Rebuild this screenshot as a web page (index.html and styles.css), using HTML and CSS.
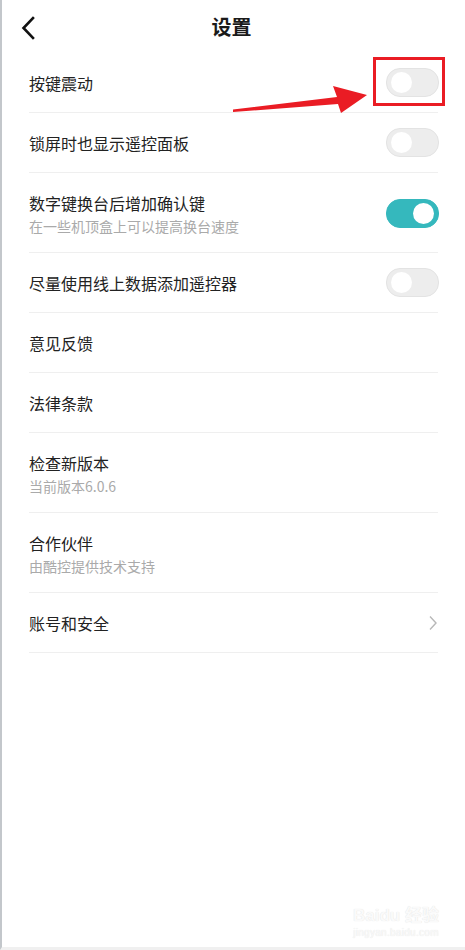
FILE: index.html
```html
<!DOCTYPE html>
<html lang="zh-CN">
<head>
    <meta charset="UTF-8">
    <meta name="viewport" content="width=device-width, initial-scale=1.0">
    <title>设置</title>
    <link rel="stylesheet" href="styles.css">
</head>
<body>
    <div class="screen">
        <header class="topbar">
            <span class="back">
                <svg width="14" height="24" viewBox="0 0 14 24"><path d="M12 2 L2.5 12 L12 22" fill="none" stroke="#111" stroke-width="2.6" stroke-linecap="square"/></svg>
            </span>
            <h1>设置</h1>
            <span></span>
        </header>

        <ul class="settings">
            <li class="item">
                <div class="text"><div class="title">按键震动</div></div>
                <span class="switch"></span>
            </li>
            <li class="item">
                <div class="text"><div class="title">锁屏时也显示遥控面板</div></div>
                <span class="switch"></span>
            </li>
            <li class="item tall">
                <div class="text">
                    <div class="title">数字键换台后增加确认键</div>
                    <div class="sub">在一些机顶盒上可以提高换台速度</div>
                </div>
                <span class="switch on"></span>
            </li>
            <li class="item">
                <div class="text"><div class="title">尽量使用线上数据添加遥控器</div></div>
                <span class="switch"></span>
            </li>
            <li class="item">
                <div class="text"><div class="title">意见反馈</div></div>
            </li>
            <li class="item">
                <div class="text"><div class="title">法律条款</div></div>
            </li>
            <li class="item tall">
                <div class="text">
                    <div class="title">检查新版本</div>
                    <div class="sub">当前版本6.0.6</div>
                </div>
            </li>
            <li class="item tall">
                <div class="text">
                    <div class="title">合作伙伴</div>
                    <div class="sub">由酷控提供技术支持</div>
                </div>
            </li>
            <li class="item">
                <div class="text"><div class="title">账号和安全</div></div>
                <svg class="chevron" width="10" height="16" viewBox="0 0 10 16"><path d="M2 1.5 L8 8 L2 14.5" fill="none" stroke="#b8b8b8" stroke-width="1.4"/></svg>
            </li>
        </ul>

        <!-- annotation drawn over the screenshot -->
        <div class="mark-box"></div>
        <svg class="mark-arrow" width="465" height="130" viewBox="0 0 465 130">
            <polygon points="233,109.5 337,97 333,86 367,95 341,113 338,104 233,112" fill="#ea1c24"/>
        </svg>

        <div class="watermark">
            <div class="wm-logo">Bai<span class="paw">du</span> 经验</div>
            <div class="wm-url">jingyan.baidu.com</div>
        </div>
    </div>
</body>
</html>
```

FILE: styles.css
```css
body {
    margin: 0;
    background-color: #fff;
    font-family: "Noto Sans CJK SC", "Noto Sans", sans-serif;
    color: #222;
}

.screen {
    position: relative;
    width: 465px;
    height: 950px;
    box-sizing: border-box;
    border-left: 2px solid #c3c7cb;
    border-bottom: 3px solid #f0f0f0;
    background-color: #fff;
}

.topbar {
    display: grid;
    grid-template-columns: 60px 1fr 60px;
    align-items: center;
    height: 53px;
}

.back {
    display: flex;
    padding-left: 19px;
    padding-top: 2px;
}

.topbar h1 {
    margin: 0;
    text-align: center;
    font-size: 20px;
    font-weight: bold;
    color: #1a1a1a;
    padding-right: 4px;
}

.settings {
    list-style: none;
    margin: 0;
    padding: 0 27px 0 27px;
}

.item {
    display: flex;
    align-items: center;
    justify-content: space-between;
    height: 59px;
    border-bottom: 1px solid #efefef;
}

.item.tall {
    height: 79px;
    box-sizing: border-box;
    height: 80px;
    padding: 2px 0 0;
}

.title {
    font-size: 16px;
    line-height: 22px;
    color: #222;
}

.sub {
    margin-top: 2px;
    font-size: 14px;
    line-height: 20px;
    color: #aaa;
}

.switch {
    position: relative;
    width: 51px;
    height: 27px;
    border-radius: 14px;
    background-color: #ededed;
    border: 1px solid #e3e3e3;
    margin-right: -1px;
}

.switch::after {
    content: "";
    position: absolute;
    top: 3px;
    left: 4px;
    width: 21px;
    height: 21px;
    border-radius: 50%;
    background-color: #fff;
}

.switch.on {
    background-color: #35b8bd;
    border-color: #35b8bd;
}

.switch.on::after {
    left: auto;
    right: 4px;
}

.mark-box {
    position: absolute;
    left: 371px;
    top: 57px;
    width: 66px;
    height: 43px;
    border: 3px solid #ea1c24;
}

.mark-arrow {
    position: absolute;
    left: -2px;
    top: 0;
}

.watermark {
    position: absolute;
    right: 26px;
    bottom: 7px;
    text-align: center;
    color: #fafafa;
    text-shadow: 0 0 1px #dcdcdc;
    font-family: "Liberation Sans", "Noto Sans CJK SC", sans-serif;
}

.wm-logo {
    font-size: 17px;
    font-weight: bold;
    line-height: 20px;
}

.wm-url {
    font-size: 10px;
    line-height: 14px;
    letter-spacing: 0.3px;
}
```
